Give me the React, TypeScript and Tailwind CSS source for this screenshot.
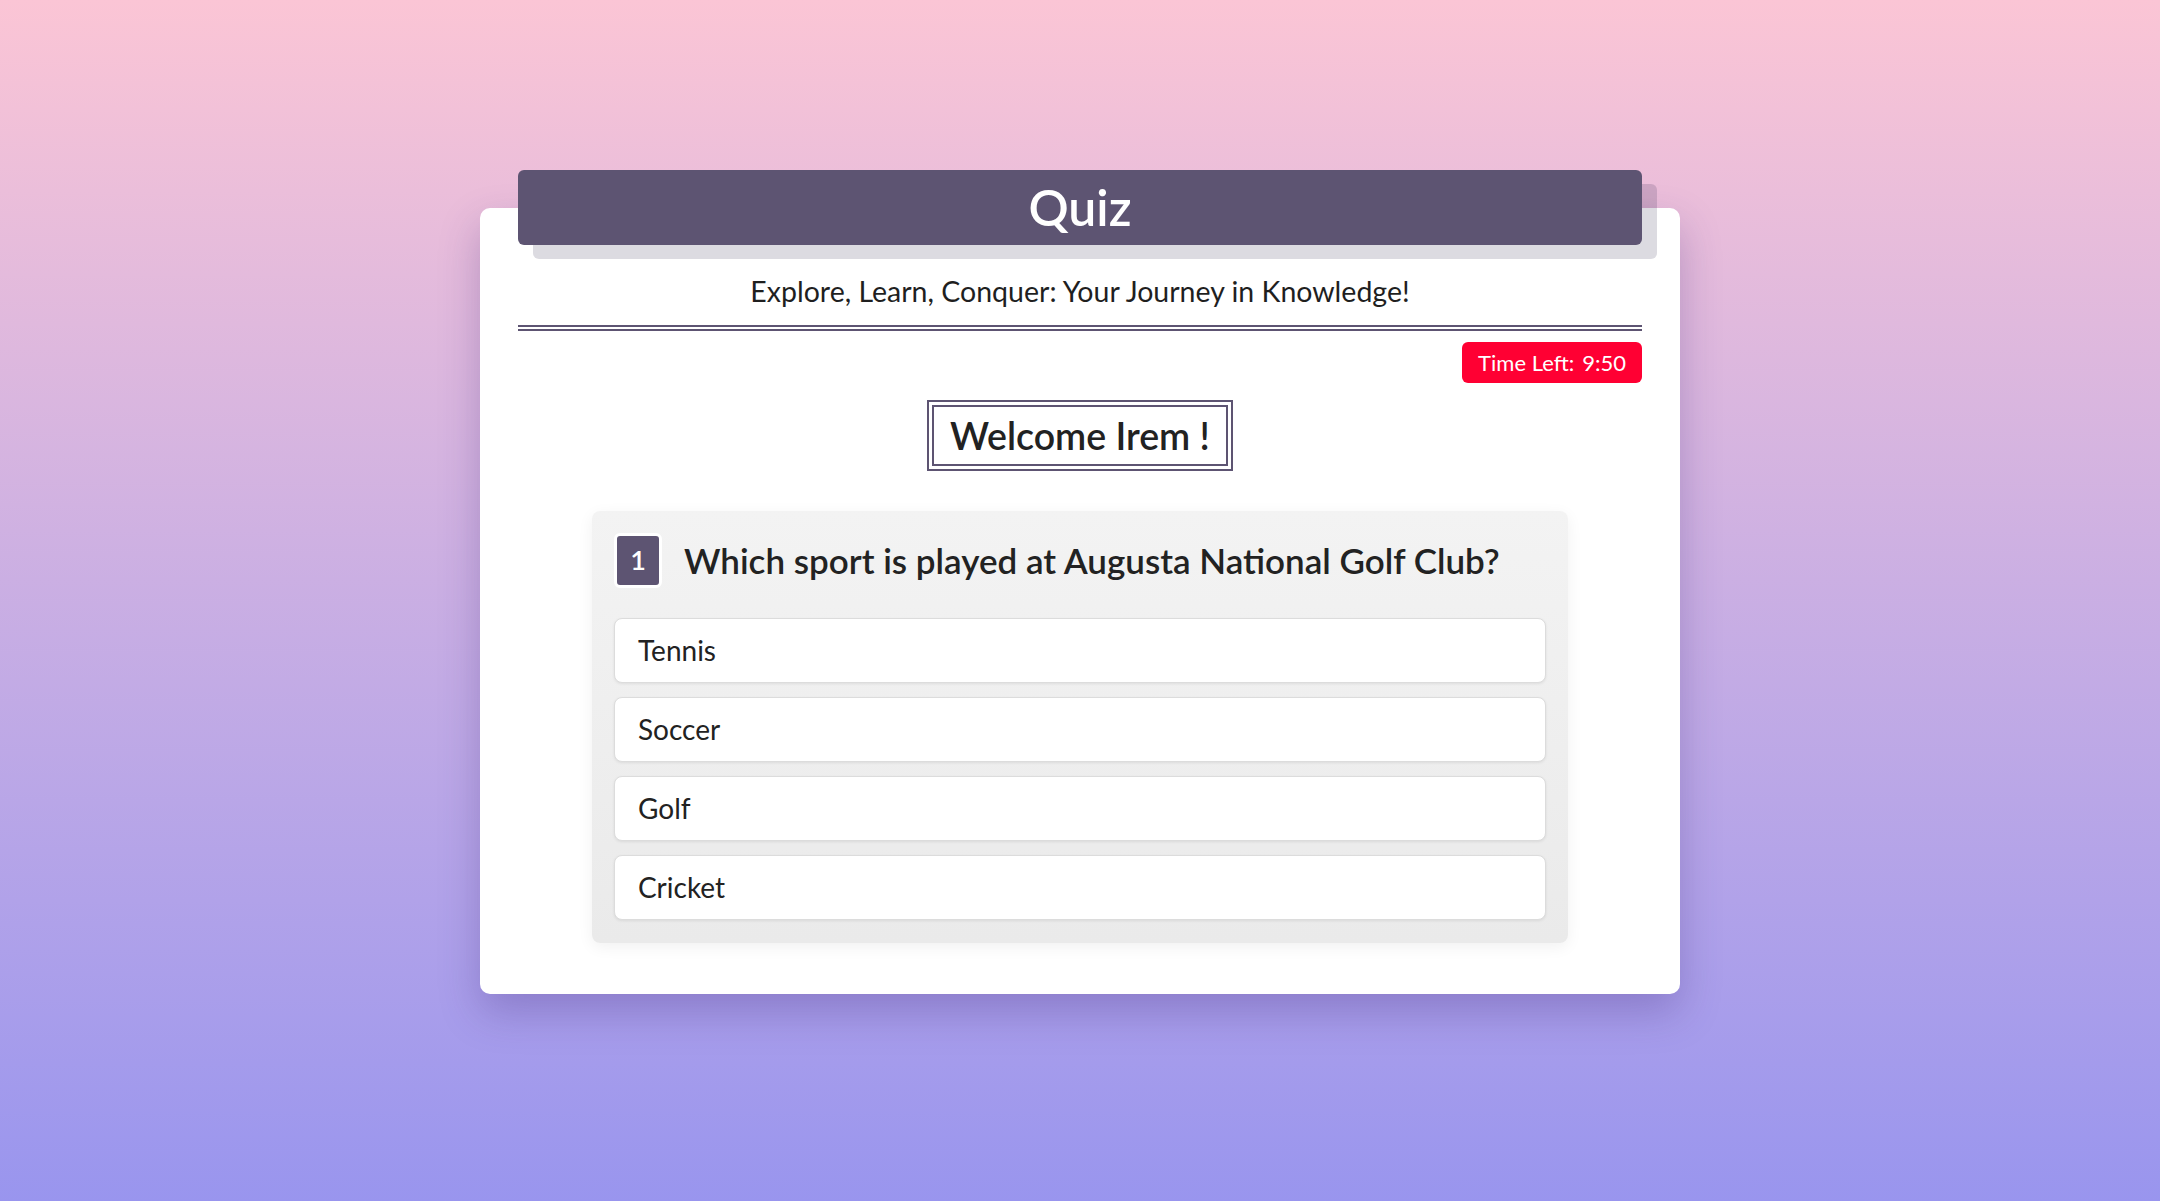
import React from "react";

const options = ["Tennis", "Soccer", "Golf", "Cricket"];

export default function App() {
  return (
    <div
      className="min-h-screen flex items-center justify-center bg-gradient-to-b from-[#fbc5d5] to-[#9995ee]"
      style={{ fontFamily: "Lato, 'Open Sans', sans-serif" }}
    >
      {/* Card */}
      <div className="flex w-[1200px] flex-col rounded-[10px] bg-white px-[38px] pb-[51px] shadow-[0_18px_40px_rgba(60,40,120,0.28)]">
        {/* Header */}
        <div className="-mt-[38px] flex h-[75px] items-center justify-center rounded-[6px] bg-[#5d5472] text-[50px] font-semibold text-white shadow-[15px_14px_0_rgba(40,30,70,0.16)]">
          Quiz
        </div>

        <p className="mt-[28px] text-center text-[28.5px] leading-[37px] text-[#1f1f1f]">
          Explore, Learn, Conquer: Your Journey in Knowledge!
        </p>
        <div className="mt-[15px] border-b-[6px] border-double border-[#5d5472]" />

        {/* Timer */}
        <div className="mt-[11px] flex justify-end">
          <div className="flex h-[41px] items-center rounded-[6px] bg-[#ff0033] px-[16px] text-[22px] text-white">
            Time Left: <span className="ml-[8px]">9:50</span>
          </div>
        </div>

        {/* Welcome */}
        <div className="mt-[17px] flex justify-center">
          <div className="border-[7px] border-double border-[#5d5472] px-[16px] py-[7px] text-[37.5px] font-semibold leading-[43px] text-[#222]">
            Welcome Irem !
          </div>
        </div>

        {/* Question panel */}
        <div className="mx-auto mt-[40px] w-[976px] rounded-[8px] bg-gradient-to-b from-[#f3f3f3] to-[#eaeaea] px-[22px] pb-[23px] pt-[22px] shadow-[0_4px_16px_rgba(0,0,0,0.06)]">
          <div className="flex items-center gap-[22px]">
            <div className="flex h-[55px] w-[48px] shrink-0 items-center justify-center rounded-[6px] border-[3px] border-white bg-[#5d5472] text-[27px] font-semibold text-white">
              1
            </div>
            <h2 className="text-[35px] font-semibold text-[#222]">
              Which sport is played at Augusta National Golf Club?
            </h2>
          </div>

          <div className="mt-[30px] flex flex-col gap-[14px]">
            {options.map((o) => (
              <div
                key={o}
                className="flex h-[65px] items-center rounded-[8px] border border-[#dcdcdc] bg-white px-[23px] text-[28px] text-[#222] shadow-[0_1px_3px_rgba(0,0,0,0.08)]"
              >
                {o}
              </div>
            ))}
          </div>
        </div>
      </div>
    </div>
  );
}
